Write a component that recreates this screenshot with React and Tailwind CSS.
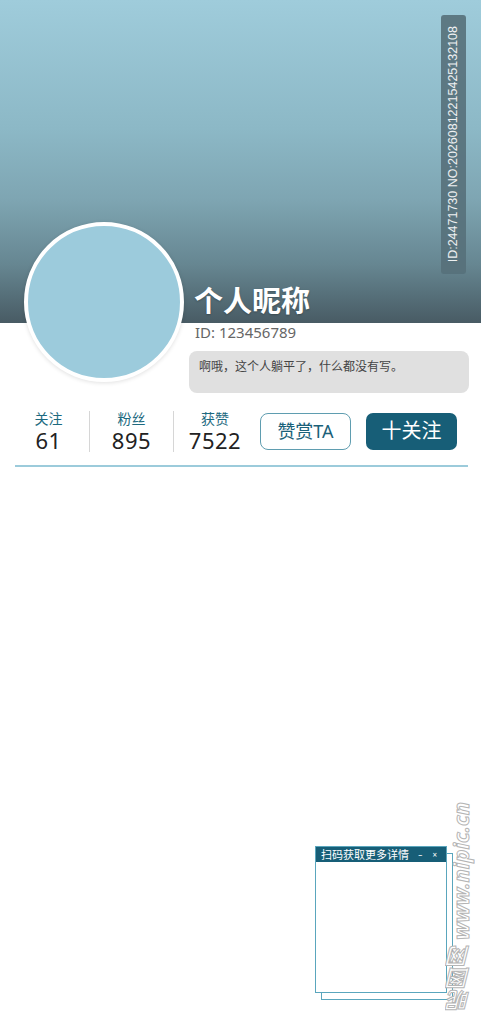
import React from 'react'

const stats = [
  { label: '关注', value: '61', w: 'w-[81px]' },
  { label: '粉丝', value: '895', w: 'w-[83px]' },
  { label: '获赞', value: '7522', w: 'w-[82px]' },
]

function QrPopup() {
  return (
    <div className="absolute left-[315px] top-[846px] w-[132px] h-[147px]">
      {/* stacked back frame */}
      <div className="absolute left-[6px] top-[7px] w-[132px] h-[147px] border border-[#5aa6bd] bg-white" />
      <div className="relative h-full border border-[#5aa6bd] bg-white flex flex-col">
        <div className="h-[15px] bg-[#175e77] flex items-center justify-between px-[5px] text-white">
          <span className="text-[11px] leading-none">扫码获取更多详情</span>
          <span className="text-[8px] leading-none tracking-[4px]">– ×</span>
        </div>
      </div>
    </div>
  )
}

export default function App() {
  return (
    <div className="relative w-[481px] h-[1024px] bg-white overflow-hidden font-['Noto_Sans','Noto_Sans_CJK_SC',sans-serif]">
      {/* Header */}
      <div className="relative h-[323px] bg-[linear-gradient(to_bottom,#9fccdb_0%,#8cb8c6_40%,#7ea5b2_62%,#668691_82%,#485b64_100%)]">
        <div className="absolute left-[441px] top-[15px] w-[25px] h-[259px] rounded-[3px] bg-[#56707a]/90 flex items-center justify-center">
          <span className="[writing-mode:vertical-rl] rotate-180 text-[12.5px] leading-none text-white/90 font-['Liberation_Sans',sans-serif] whitespace-nowrap">
            ID:24471730 NO:20260812215425132108
          </span>
        </div>
      </div>

      {/* Profile */}
      <div className="relative flex -mt-[101px] pl-[24px]">
        <div className="w-[160px] h-[160px] shrink-0 rounded-full border-[4px] border-white bg-[#9ccbdc] shadow-[0_1px_4px_rgba(0,0,0,0.12)]" />
        <div className="ml-[5px] flex flex-col">
          <div className="mt-[59px] ml-[5px] text-[29px] leading-[40px] font-bold text-white [text-shadow:0_1px_2px_rgba(0,0,0,0.25)]">
            个人昵称
          </div>
          <div className="ml-[6px] text-[15px] leading-[22px] text-[#666]">ID: 123456789</div>
          <div className="mt-[8px] w-[280px] h-[42px] rounded-[8px] bg-[#e0e0e0] px-[10px] pt-[7px] text-[12px] leading-[18px] text-[#444]">
            啊哦，这个人躺平了，什么都没有写。
          </div>
        </div>
      </div>

      {/* Stats */}
      <div className="flex items-center mt-[17px] pl-[8px]">
        {stats.map((s, i) => (
          <React.Fragment key={s.label}>
            {i > 0 && <div className="w-px h-[41px] bg-[#d6d6d6]" />}
            <div className={`${s.w} flex flex-col items-center`}>
              <span className="text-[14px] leading-[17px] text-[#1d6a80]">{s.label}</span>
              <span className="mt-[1px] text-[22px] leading-[24px] text-[#222] tracking-[0.5px]">{s.value}</span>
            </div>
          </React.Fragment>
        ))}
        <button className="ml-[4px] w-[91px] h-[37px] rounded-[8px] border border-[#5f9db0] text-[18px] text-[#1b6179] flex items-center justify-center">
          赞赏TA
        </button>
        <button className="ml-[15px] w-[91px] h-[37px] rounded-[7px] bg-[#175e77] text-[20px] text-white flex items-center justify-center">
          十关注
        </button>
      </div>

      <div className="mx-[15px] mt-[13px] w-[453px] h-[2px] bg-[#9ccbdb]" />

      <QrPopup />

      {/* watermark */}
      <div className="absolute left-[447px] top-[812px] w-[26px] h-[190px] flex items-center justify-center">
        <span className="[writing-mode:vertical-rl] rotate-180 whitespace-nowrap text-[22px] leading-none font-bold italic text-white [-webkit-text-stroke:1px_#b5b5b5]">
          昵图网 www.nipic.cn
        </span>
      </div>
    </div>
  )
}
